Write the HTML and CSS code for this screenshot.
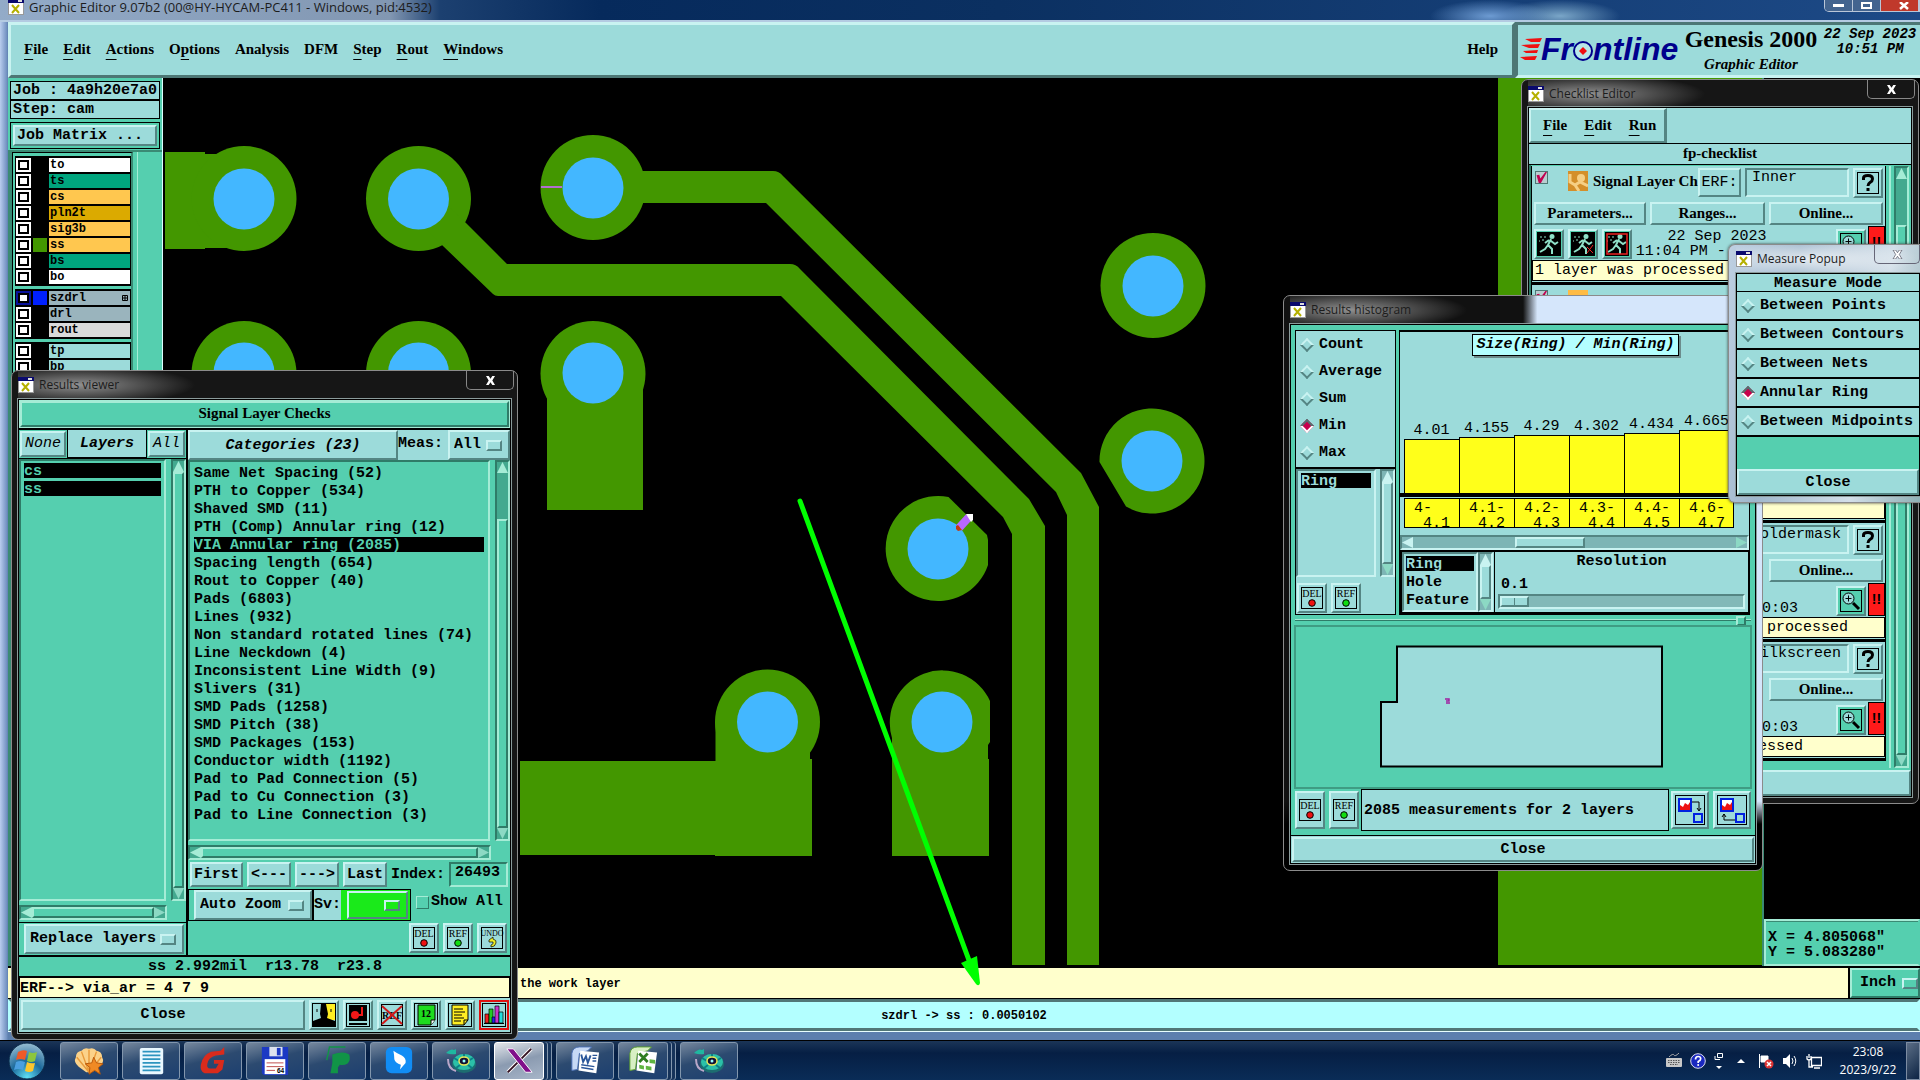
FILE: index.html
```html
<!DOCTYPE html>
<html lang="en">
<head>
  <meta charset="UTF-8" />
  <meta name="viewport" content="width=device-width, initial-scale=1.0"/>
  <title>Graphic Editor 9.07b2</title>
  <link rel="stylesheet" href="styles.css">
</head>
<body>
  <!-- shared icons -->
  <svg class="defs" width="0" height="0">
    <symbol id="i-win" viewBox="0 0 16 16"><rect x=".5" y=".5" width="15" height="15" fill="#fff" stroke="#999"/><rect width="16" height="4" fill="#0a0a6e"/><rect x="10" y="1" width="4" height="2" fill="#ddd"/><path d="M4 6l7 8M11 6l-7 8" stroke="#b5b000" stroke-width="2"/></symbol>
    <symbol id="i-help" viewBox="0 0 24 24"><rect x="1.500" y="1.500" width="21" height="21" fill="none" stroke="#000"/><path d="M7.500 9V7q0-2.500 4.500-2.500T16.500 8q0 2-2.500 3.500-2 1.200-2 3.500" fill="none" stroke="#000" stroke-width="3"/><rect x="10.500" y="17" width="3" height="3"/></symbol>
    <symbol id="i-zoom" viewBox="0 0 24 24"><rect x="1.500" y="1.500" width="21" height="21" fill="#55cfaf" stroke="#000"/><circle cx="9.500" cy="9.500" r="5.500" fill="#9cdbda" stroke="#000"/><path d="M6.500 9.500h6M9.500 6.500v6" stroke="#000"/><path d="M14 14l6 6" stroke="#000" stroke-width="3"/></symbol>
    <symbol id="i-run" viewBox="0 0 24 24"><rect width="24" height="24"/><circle cx="15" cy="4.500" r="2.500" fill="#8fe0c8"/><path d="M14 7l-3 6 4 4v5M11 13l-3 4-5 3M12 8l-4 3M14 9l4 3 3-2" fill="none" stroke="#8fe0c8" stroke-width="2"/><path d="M3 5h2M7 5h2M5 8h2M2 9h1" stroke="#8fe0c8"/></symbol>
    <symbol id="i-reel" viewBox="0 0 32 28"><ellipse cx="19" cy="17" rx="12" ry="9" fill="#1d6d70"/><ellipse cx="19" cy="15" rx="11" ry="8" fill="#2bc0a8"/><path d="M9 11l5 3M28 11l-5 3M19 7v4M11 21l4-3M27 21l-4-3" stroke="#0c7f86" stroke-width="2"/><ellipse cx="19" cy="14" rx="5" ry="4" fill="#113" stroke="#e8e65a" stroke-width="1.500"/><circle cx="19" cy="14" r="1.500" fill="#9ff"/><path d="M1 6q5-5 8-3l2-1v5q-5 1-10-1z" fill="#1fb7a0"/><path d="M3 12q0 10 8 12" fill="none" stroke="#b9a7c9" stroke-width="2"/></symbol>
  </svg>

  <main class="editor">
    <div class="titlebar main-title">
      <svg class="win-icon"><use href="#i-win"/></svg>
      <span>Graphic Editor 9.07b2 (00@HY-HYCAM-PC411 - Windows, pid:4532)</span>
      <div class="caption-btns">
        <button aria-label="Minimize"><i class="min"></i></button><button aria-label="Maximize"><i class="max"></i></button><button class="red" aria-label="Close"><svg width="10" height="8" viewBox="0 0 10 8"><path d="M1 0l8 7M9 0L1 7" stroke="#fff" stroke-width="2.500"/></svg></button>
      </div>
    </div>

    <header class="header">
      <nav class="menubar">
        <a href="#"><u>F</u>ile</a><a href="#"><u>E</u>dit</a><a href="#"><u>A</u>ctions</a><a href="#">O<u>p</u>tions</a><a href="#">Analysis</a><a href="#">DFM</a><a href="#"><u>S</u>tep</a><a href="#"><u>R</u>out</a><a href="#"><u>W</u>indows</a>
        <a href="#" class="help">Help</a>
      </nav>
      <div class="brand">
        <svg class="logo" viewBox="0 0 162 34">
          <g fill="#f01010"><path d="M5 3l17-1-2 4H11zM1 9l19-1-2 4H9zM3 15l15-1-1 3H6zM0 21l17-1-2 4H5z"/></g>
          <g fill="#00008c"><text x="21" y="24">Fr</text><text x="73" y="24">ntline</text></g>
          <circle cx="63" cy="15" r="9" fill="#b8e8e8" stroke="#00008c" stroke-width="2"/><path d="M63 11l4 4-4 4-4-4z" fill="#f01010"/>
        </svg>
        <div class="product"><strong>Genesis 2000</strong><em>Graphic Editor</em></div>
        <div class="clock">22 Sep 2023<br>10:51 PM</div>
      </div>
    </header>

    <section class="workspace">
      <aside class="sidebar">
        <div class="field">Job : 4a9h20e7a0</div>
        <div class="field">Step: cam</div>
        <div class="matrix"><button class="raised">Job Matrix ...</button></div>
        <div class="layers">
          <div class="layer-list">
            <div class="group">
              <label><input type="checkbox"><i></i><span class="white">to</span></label>
              <label><input type="checkbox"><i></i><span class="mask">ts</span></label>
              <label><input type="checkbox"><i></i><span class="signal">cs</span></label>
              <label><input type="checkbox"><i></i><span class="plane">pln2t</span></label>
              <label><input type="checkbox"><i></i><span class="signal">sig3b</span></label>
              <label><input type="checkbox"><i class="on-green"></i><span class="signal">ss</span></label>
              <label><input type="checkbox"><i></i><span class="mask">bs</span></label>
              <label><input type="checkbox"><i></i><span class="white">bo</span></label>
            </div>
            <div class="group">
              <label><input type="checkbox" class="work"><i class="on-blue"></i><span class="drill">szdrl<svg width="6" height="12" viewBox="0 0 6 12"><path d="M.5 4.500h5v5h-5zM3 4.500v5M.5 7h5" fill="none" stroke="#000"/></svg></span></label>
              <label><input type="checkbox"><i></i><span class="drill">drl</span></label>
              <label><input type="checkbox"><i></i><span class="rout">rout</span></label>
            </div>
            <div class="group">
              <label><input type="checkbox"><i></i><span class="misc">tp</span></label>
              <label><input type="checkbox"><i></i><span class="misc">bp</span></label>
            </div>
          </div>
          <div class="layer-scroll"></div>
        </div>
      </aside>

      <div class="canvas">
        <svg viewBox="163 78 1601 888" preserveAspectRatio="xMinYMin slice">
          <g fill="#439700">
            <path d="M165 152h40v2h39v94h-39v1h-40z"/>
            <circle cx="244" cy="198.500" r="52.500"/><circle cx="418.500" cy="198.500" r="52.500"/><circle cx="593" cy="187.500" r="52.500"/>
            <circle cx="244" cy="373.500" r="52.500"/><circle cx="418.500" cy="373.500" r="52.500"/><circle cx="593" cy="373.500" r="52.500"/>
            <path d="M547 380h96v130h-96z"/>
            <!-- traces -->
            <path d="M593 171H773q6 0 10 5L1081 473l18 34V965h-32V515l-11-23L766 203H593z"/>
            <path d="M443 246l-20-20 20-25 23 22 41 41H790q6 0 10 5L1029 499l16 27V965h-33V534l-9-17L781 296H498q-3 0-5-2z"/>
            <circle cx="1153" cy="285.500" r="52.500"/>
            <path d="M1099.500 462A52.500 52.500 0 1 1 1126 506.600z"/>
            <path d="M948.500 497A52.500 52.500 0 1 0 988 565V540l-1-5z"/>
            <circle cx="767.500" cy="722" r="52.500"/>
            <path d="M520 761h195.500V722H810v37h2v97H715v-1H520z"/>
            <path d="M990 701A52.500 52.500 0 0 0 892 738v118h97V759h-1V745l2-3z"/>
            <path d="M1498 78h266v887h-266z"/>
          </g>
          <g fill="#43b7ff">
            <circle cx="244" cy="199" r="30.500"/><circle cx="418.500" cy="199" r="30.500"/><circle cx="593" cy="188" r="30.500"/>
            <circle cx="244" cy="373" r="30.500"/><circle cx="418.500" cy="373" r="30.500"/><circle cx="593" cy="373" r="30.500"/>
            <circle cx="1153" cy="286" r="30.500"/><circle cx="1152" cy="461" r="30.500"/><circle cx="938" cy="549" r="30.500"/>
            <circle cx="767.500" cy="722" r="30.500"/><circle cx="942" cy="722" r="30.500"/>
          </g>
          <path d="M541 187h21" stroke="#b26fd0" stroke-width="2"/>
          <path d="M959 528l10-11" stroke="#b867ff" stroke-width="8"/><path d="M966 514h7v6l-2 2z" fill="#fff"/><path d="M956 526l2-1 4 5-4 1-2-2z" fill="#c33a10"/>
          <path d="M800 501L970 963" stroke="#0f0" stroke-width="5" stroke-linecap="round"/><path d="M961 963l16-7 3 27q-1 4-4 1z" fill="#0f0"/>
        </svg>
      </div>

      <div class="coords-col">
        <div class="coords">X = 4.805068"<br>Y = 5.083280"</div>
      </div>
    </section>

    <div class="command">
      <p>the work layer</p>
      <label class="option teal raised"><select aria-label="Units"><option>Inch</option></select></label>
    </div>
    <div class="status">szdrl -&gt; ss : 0.0050102</div>

    <!-- Checklist editor -->
    <section class="win checklist">
      <div class="titlebar"><svg class="win-icon"><use href="#i-win"/></svg><span>Checklist Editor</span><button class="x" aria-label="Close window"><svg viewBox="0 0 12 10"><path d="M1 0h3l2 3 2-3h3L8 5l3 5H8L6 7l-2 3H1l3-5z" fill="#fff"/></svg></button></div>
      <div class="client">
        <nav class="check-menu"><div class="raised"><a href="#"><u>F</u>ile</a><a href="#"><u>E</u>dit</a><a href="#"><u>R</u>un</a></div></nav>
        <h2>fp-checklist</h2>
        <div class="check-body">
          <div class="check-items">
            <article class="check">
              <div class="check-head"><input type="checkbox" checked aria-label="Enable Signal Layer Checks"><svg class="layer-icon" viewBox="0 0 20 20"><rect width="20" height="20" fill="#d48f2a"/><path d="M2 3v8l5 3 4 6M7 14l5-3 8 4" stroke="#f6cf84" stroke-width="3" fill="none"/><circle cx="13" cy="7" r="4" fill="#f6cf84"/></svg><strong>Signal Layer Ch</strong><button class="raised erf">ERF:</button><input class="sunken" value="Inner" aria-label="ERF model"><button class="raised icon" aria-label="Help"><svg><use href="#i-help"/></svg></button></div>
              <div class="check-acts"><button class="raised">Parameters...</button><button class="raised">Ranges...</button><button class="raised">Online...</button></div>
              <div class="check-run"><button class="raised icon green" aria-label="Run"><svg><use href="#i-run"/></svg></button><button class="raised icon green" aria-label="Run on feature"><svg viewBox="0 0 24 24"><use href="#i-run"/><path d="M16 15l6 6M22 13l-6 8" stroke="#e22"/></svg></button><button class="raised icon green" aria-label="Run in profile"><svg viewBox="0 0 24 24"><use href="#i-run"/><rect x="2" y="2" width="20" height="20" fill="none" stroke="#e22" stroke-width="1.500"/></svg></button><p>22 Sep 2023<span>11:04 PM -</span></p><button class="raised icon green zoom" aria-label="Results"><svg><use href="#i-zoom"/></svg></button><b class="alert">!!</b></div>
              <div class="note">1 layer was processed</div>
            </article>
            <article class="check">
              <div class="check-head"><input type="checkbox" checked aria-label="Enable check"><svg class="layer-icon" viewBox="0 0 20 20"><rect width="20" height="20" fill="#fb4"/></svg></div>
            </article>
            <article class="check">
              <div class="check-head"></div>
              <div class="check-acts"></div>
              <div class="check-run"></div>
              <div class="note"></div>
            </article>
            <article class="check">
              <div class="check-head"><input class="sunken part" value="oldermask" aria-label="ERF model"><button class="raised icon" aria-label="Help"><svg><use href="#i-help"/></svg></button></div>
              <div class="check-acts"><button class="raised last">Online...</button></div>
              <div class="check-run"><p class="end">0:03</p><button class="raised icon green zoom" aria-label="Results"><svg><use href="#i-zoom"/></svg></button><b class="alert">!!</b></div>
              <div class="note long">processed</div>
            </article>
            <article class="check">
              <div class="check-head"><input class="sunken part" value="ilkscreen" aria-label="ERF model"><button class="raised icon" aria-label="Help"><svg><use href="#i-help"/></svg></button></div>
              <div class="check-acts"><button class="raised last">Online...</button></div>
              <div class="check-run"><p class="end">0:03</p><button class="raised icon green zoom" aria-label="Results"><svg><use href="#i-zoom"/></svg></button><b class="alert">!!</b></div>
              <div class="note short">essed</div>
            </article>
          </div>
          <div class="vbar late"><i class="up"></i><i class="thumb"></i><i class="down"></i></div>
        </div>
        <button class="raised check-close" aria-label="Close"></button>
      </div>
    </section>

    <!-- Results histogram -->
    <section class="win histogram">
      <div class="titlebar"><svg class="win-icon"><use href="#i-win"/></svg><span>Results histogram</span><button class="x" aria-label="Close window"></button></div>
      <div class="client">
        <div class="hist-top">
          <div class="hist-left">
            <fieldset class="stats">
              <label><input type="radio" name="stat">Count</label>
              <label><input type="radio" name="stat">Average</label>
              <label><input type="radio" name="stat">Sum</label>
              <label><input type="radio" name="stat" checked>Min</label>
              <label><input type="radio" name="stat">Max</label>
            </fieldset>
            <div class="pick cyan-bars">
              <ul class="list"><li class="sel">Ring</li></ul>
              <div class="vbar"><i class="up"></i><i class="thumb"></i><i class="down"></i></div>
            </div>
            <div class="tools"><button class="raised icon" aria-label="Delete"><svg viewBox="0 0 24 24"><rect x="1.500" y="1.500" width="21" height="21" fill="none" stroke="#000"/><text x="12" y="11" text-anchor="middle">DEL</text><circle cx="12" cy="17" r="3.300" fill="#e11" stroke="#000"/></svg></button><button class="raised icon" aria-label="Reference"><svg viewBox="0 0 24 24"><rect x="1.500" y="1.500" width="21" height="21" fill="none" stroke="#000"/><text x="12" y="11" text-anchor="middle">REF</text><circle cx="12" cy="17" r="3.300" fill="#1d1" stroke="#000"/></svg></button></div>
          </div>
          <div class="hist-right cyan-bars">
            <div class="chart">
              <h3>Size(Ring) / Min(Ring)</h3>
              <div class="bars">
                <div><span>4.01</span><i style="height:54px"></i></div>
                <div><span>4.155</span><i style="height:56px"></i></div>
                <div><span>4.29</span><i style="height:58px"></i></div>
                <div><span>4.302</span><i style="height:58px"></i></div>
                <div><span>4.434</span><i style="height:60px"></i></div>
                <div><span>4.665</span><i style="height:63px"></i></div>
              </div>
              <div class="ticks">
                <div>4-<br>&nbsp;4.1</div><div>4.1-<br>&nbsp;4.2</div><div>4.2-<br>&nbsp;4.3</div><div>4.3-<br>&nbsp;4.4</div><div>4.4-<br>&nbsp;4.5</div><div>4.6-<br>&nbsp;4.7</div>
              </div>
            </div>
            <div class="hbar"><i class="left"></i><i class="thumb"></i><i class="right"></i></div>
            <div class="hist-opts">
              <ul class="list"><li class="sel">Ring</li><li>Hole</li><li>Feature</li></ul>
              <div class="vbar"><i class="up"></i><i class="thumb"></i><i class="down"></i></div>
              <div class="resolution"><label for="res">Resolution</label><output>0.1</output><input type="range" id="res" min="0.1" max="10" step="0.1" value="0.1"></div>
            </div>
          </div>
        </div>
        <div class="splitter"><i></i></div>
        <div class="map">
          <svg viewBox="0 0 454 160"><path d="M101 19.500h265v120H85V75h16V19.500z" fill="#9cdbda" stroke="#000" stroke-width="2"/><path d="M149 72h4v2h-3M150 76h4" stroke="#a020a0" stroke-width="1.500" fill="none"/></svg>
        </div>
        <div class="hist-info">
          <button class="raised icon" aria-label="Delete"><svg viewBox="0 0 24 24"><rect x="1.500" y="1.500" width="21" height="21" fill="none" stroke="#000"/><text x="12" y="11" text-anchor="middle">DEL</text><circle cx="12" cy="17" r="3.300" fill="#e11" stroke="#000"/></svg></button><button class="raised icon" aria-label="Reference"><svg viewBox="0 0 24 24"><rect x="1.500" y="1.500" width="21" height="21" fill="none" stroke="#000"/><text x="12" y="11" text-anchor="middle">REF</text><circle cx="12" cy="17" r="3.300" fill="#1d1" stroke="#000"/></svg></button>
          <p>2085 measurements for 2 layers</p>
          <button class="raised icon big" aria-label="Zoom to chart"><svg viewBox="0 0 30 30"><rect x=".5" y=".5" width="29" height="29" fill="none" stroke="#000"/><rect x="4" y="4" width="12" height="12" fill="#fff" stroke="#0020e0" stroke-width="2"/><path d="M5 15v-5l3 2 2-4 3 2 2-3v8z" fill="#e11"/><path d="M17 7h7v8M22 13l2 3 2-3" fill="none" stroke="#000"/><rect x="19" y="19" width="8" height="8" fill="none" stroke="#0020e0" stroke-width="2"/></svg></button><button class="raised icon big" aria-label="Zoom from chart"><svg viewBox="0 0 30 30"><rect x=".5" y=".5" width="29" height="29" fill="none" stroke="#000"/><rect x="4" y="4" width="12" height="12" fill="#fff" stroke="#0020e0" stroke-width="2"/><path d="M5 15v-5l3 2 2-4 3 2 2-3v8z" fill="#e11"/><path d="M18 25H7v-6M5 22l2-3 2 3" fill="none" stroke="#000"/><rect x="19" y="19" width="8" height="8" fill="none" stroke="#0020e0" stroke-width="2"/></svg></button>
        </div>
        <div class="hist-close"><button class="raised">Close</button></div>
      </div>
    </section>

    <!-- Measure popup -->
    <section class="win measure">
      <div class="titlebar"><svg class="win-icon"><use href="#i-win"/></svg><span>Measure Popup</span><button class="x" aria-label="Close window"><svg viewBox="0 0 12 10"><path d="M1 0h3l2 3 2-3h3L8 5l3 5H8L6 7l-2 3H1l3-5z" fill="#fff" stroke="#445" stroke-width=".7"/></svg></button></div>
      <div class="client">
        <fieldset>
          <legend>Measure Mode</legend>
          <label><input type="radio" name="measure">Between Points</label>
          <label><input type="radio" name="measure">Between Contours</label>
          <label><input type="radio" name="measure">Between Nets</label>
          <label><input type="radio" name="measure" checked>Annular Ring</label>
          <label><input type="radio" name="measure">Between Midpoints</label>
        </fieldset>
        <button class="raised">Close</button>
      </div>
    </section>

    <!-- Results viewer -->
    <section class="win viewer">
      <div class="titlebar"><svg class="win-icon"><use href="#i-win"/></svg><span>Results viewer</span><button class="x" aria-label="Close window"><svg viewBox="0 0 12 10"><path d="M1 0h3l2 3 2-3h3L8 5l3 5H8L6 7l-2 3H1l3-5z" fill="#fff"/></svg></button></div>
      <div class="client">
        <h2>Signal Layer Checks</h2>
        <div class="panes">
          <div class="pane-layers">
            <div class="pane-head"><button class="raised">None</button><b>Layers</b><button class="raised">All</button></div>
            <div class="pick">
              <ul class="list"><li class="sel">cs</li><li class="sel">ss</li></ul>
              <div class="vbar"><i class="up"></i><i class="thumb"></i><i class="down"></i></div>
            </div>
            <div class="hbar full"><i class="left"></i><i class="thumb"></i><i class="right"></i></div>
            <div class="pane-foot"><label class="option raised"><select aria-label="Layer action"><option>Replace layers</option></select></label></div>
          </div>
          <div class="pane-cats">
            <div class="cat-head"><button class="raised">Categories (23)</button><label for="meas">Meas:</label><span class="option raised"><select id="meas"><option>All</option></select></span></div>
            <div class="pick">
              <ul class="list">
                <li>Same Net Spacing (52)</li>
                <li>PTH to Copper (534)</li>
                <li>Shaved SMD (11)</li>
                <li>PTH (Comp) Annular ring (12)</li>
                <li class="sel">VIA Annular ring (2085)</li>
                <li>Spacing length (654)</li>
                <li>Rout to Copper (40)</li>
                <li>Pads (6803)</li>
                <li>Lines (932)</li>
                <li>Non standard rotated lines (74)</li>
                <li>Line Neckdown (4)</li>
                <li>Inconsistent Line Width (9)</li>
                <li>Slivers (31)</li>
                <li>SMD Pads (1258)</li>
                <li>SMD Pitch (38)</li>
                <li>SMD Packages (153)</li>
                <li>Conductor width (1192)</li>
                <li>Pad to Pad Connection (5)</li>
                <li>Pad to Cu Connection (3)</li>
                <li>Pad to Line Connection (3)</li>
              </ul>
              <div class="vbar late"><i class="up"></i><i class="thumb"></i><i class="down"></i></div>
            </div>
            <div class="hbar full"><i class="left"></i><i class="thumb"></i><i class="right"></i></div>
            <div class="nav-row"><button class="raised">First</button><button class="raised">&lt;---</button><button class="raised">---&gt;</button><button class="raised">Last</button><label for="idx">Index:</label><input id="idx" class="sunken" value="26493"></div>
            <div class="zoom-row">
              <div class="zoom-box"><label class="option raised"><select aria-label="Zoom mode"><option>Auto Zoom</option></select></label><label for="sv">Sv:</label><span class="sv"><span class="option raised"><select id="sv"><option></option></select></span></span></div>
              <label class="show-all"><input type="checkbox">Show All</label>
            </div>
            <div class="tools"><button class="raised icon" aria-label="Delete"><svg viewBox="0 0 24 24"><rect x="1.500" y="1.500" width="21" height="21" fill="none" stroke="#000"/><text x="12" y="11" text-anchor="middle">DEL</text><circle cx="12" cy="17" r="3.300" fill="#e11" stroke="#000"/></svg></button><button class="raised icon" aria-label="Reference"><svg viewBox="0 0 24 24"><rect x="1.500" y="1.500" width="21" height="21" fill="none" stroke="#000"/><text x="12" y="11" text-anchor="middle">REF</text><circle cx="12" cy="17" r="3.300" fill="#1d1" stroke="#000"/></svg></button><button class="raised icon" aria-label="Undo"><svg viewBox="0 0 24 24"><rect x="1.500" y="1.500" width="21" height="21" fill="none" stroke="#000"/><text x="12" y="10" text-anchor="middle" class="small">UNDO</text><path d="M9 14l4-3v2q4 1 3 4-1 4-5 4v-2q3-1 2-3h-4z" fill="#ee2" stroke="#000" stroke-width=".7"/></svg></button></div>
          </div>
        </div>
        <div class="result">ss 2.992mil&nbsp; r13.78&nbsp; r23.8</div>
        <div class="erf-line">ERF--&gt; via_ar = 4 7 9</div>
        <div class="viewer-foot">
          <button class="raised">Close</button>
          <button class="raised icon" aria-label="Compare"><svg viewBox="0 0 24 24"><rect x=".5" y=".5" width="23" height="23" fill="#9cdbda" stroke="#000"/><path d="M14 1h9v16h-9z" fill="#fe2"/><path d="M9 1h5l2 10-1 4 8 3v5H1v-5l8-3-1-4z"/><path d="M5 6v3M19 6v3" stroke="#000"/></svg></button>
          <button class="raised icon" aria-label="Snapshot"><svg viewBox="0 0 24 24"><rect x=".5" y=".5" width="23" height="23" fill="#9cdbda" stroke="#000"/><path d="M3 2h18v16H3zM3 20h18v2H3z"/><circle cx="9" cy="12" r="4" fill="#f01818"/><path d="M11 12h5V4" stroke="#f01818" stroke-width="2" fill="none"/></svg></button>
          <button class="raised icon" aria-label="Clear reference"><svg viewBox="0 0 24 24"><rect x="1.500" y="1.500" width="21" height="21" fill="none" stroke="#000"/><text x="12" y="16" text-anchor="middle">REF</text><path d="M2 3l20 18M22 3L2 21" stroke="#d01818" stroke-width="2"/></svg></button>
          <button class="raised icon" aria-label="Report count"><svg viewBox="0 0 24 24"><rect x=".5" y=".5" width="23" height="23" fill="#9cdbda" stroke="#000"/><path d="M4 2h17v15l-4 5H4z" fill="#1edc1e" stroke="#000"/><text x="12" y="14" text-anchor="middle">12</text><path d="M17 22v-5h4" fill="#fff" stroke="#000"/></svg></button>
          <button class="raised icon" aria-label="Notes"><svg viewBox="0 0 24 24"><rect x=".5" y=".5" width="23" height="23" fill="#9cdbda" stroke="#000"/><path d="M4 2h16v15l-4 5H4z" fill="#fe2" stroke="#000"/><path d="M6 6h9M6 9h11M6 12h8M6 15h10M6 18h7M16 22v-5h4" stroke="#000" fill="none"/></svg></button>
          <button class="raised icon hot" aria-label="Histogram"><svg viewBox="0 0 24 24"><rect x=".5" y=".5" width="23" height="23" fill="#9cdbda" stroke="#000"/><g stroke="#000" stroke-width=".7"><path d="M3 11h4v9H3z" fill="#e22"/><path d="M7 6h4v14H7z" fill="#2c2"/><path d="M10 14h4v6h-4z" fill="#22e"/><path d="M13 3h4v17h-4z" fill="#c3c"/><path d="M17 9h4v11h-4z" fill="#2dd"/></g><path d="M2 20.500h20" stroke="#000"/></svg></button>
        </div>
      </div>
    </section>
  </main>

  <footer class="taskbar">
    <button class="start" aria-label="Start"><svg viewBox="0 0 38 38"><defs><radialGradient id="orb" cx=".5" cy=".95" r=".9"><stop offset="0" stop-color="#5fe0f5"/><stop offset=".5" stop-color="#1c6a9c"/><stop offset="1" stop-color="#8db6cd"/></radialGradient></defs><circle cx="19" cy="19" r="18" fill="url(#orb)" stroke="#0b2c4a"/><path d="M10 10q5-3 9-1l-2 9q-5-2-9 0z" fill="#ee5a28"/><path d="M21 10q4 2 8 0l-2 9q-4 2-8 0z" fill="#8cc63e"/><path d="M8 20q4-2 9 0l-2 8q-5-2-9 0z" fill="#4a9fe0"/><path d="M19 20q4 2 8 1l-2 8q-4 2-8 0z" fill="#fcc62d"/></svg></button>
    <button class="task" aria-label="Shell"><svg viewBox="0 0 34 32"><path d="M17 3q5-2 8 2 6 1 6 7 3 5-3 10l-8 6h-6l-8-6Q0 17 3 12q0-6 6-7 3-4 8-2z" fill="#fbd28a"/><path d="M17 28V4M17 28L9 6M17 28L4 12M17 28L25 6M17 28L30 12" stroke="#e89a3a" stroke-width="1.500"/><path d="M22 12l3 6 7 1-5 4 2 7-6-4-6 4 1-7-5-4 7-1z" fill="#f08a24" stroke="#b85608"/></svg></button>
    <button class="task" aria-label="Notepad"><svg viewBox="0 0 34 32"><rect x="5" y="2" width="25" height="28" rx="2" fill="#eaf8ff"/><path d="M8 6h19M8 10h19M8 14h19M8 18h19M8 22h19M8 26h19" stroke="#2c94bf" stroke-width="2"/></svg></button>
    <button class="task" aria-label="Genesis"><svg viewBox="0 0 34 32"><path d="M29 1v8l-9 1q-8 2-9 9-1 5 3 5h6l3-5h-5v-4h11l-2 10-5 4H8q-5-2-4-9 2-11 11-14l10-1z" fill="#d92b1c"/></svg></button>
    <button class="task" aria-label="Save"><svg viewBox="0 0 34 32"><path d="M3 1h28v30H5l-2-2z" fill="#1c39c4"/><path d="M11 1h14v10H11z" fill="#dde2ee"/><path d="M19 2h4v8h-4z" fill="#1c39c4"/><path d="M6 14h22v16H6z" fill="#fff"/><path d="M8 18h18M8 22h18M8 26h9" stroke="#b44"/><text x="23" y="29" text-anchor="middle">64</text></svg></button>
    <button class="task" aria-label="P client"><svg viewBox="0 0 34 32"><path d="M6 15L9 1h17" stroke="#119447" fill="none" stroke-width="1.500"/><path d="M12 9q12-4 18 0 2 6-2 10-4 2-8 1l-2 3v6h-8l2-11z" fill="#119447"/></svg></button>
    <button class="task" aria-label="Wing"><svg viewBox="0 0 34 32"><rect x="3" y="1" width="28" height="28" rx="6" fill="#118df5"/><path d="M11 5q4 3 9 5 5 3 4 8l-6 7 1-5q-6-2-7-6 0-4-1-9z" fill="#fff"/></svg></button>
    <button class="task" aria-label="Reel"><svg viewBox="0 0 34 28"><use href="#i-reel"/></svg></button>
    <button class="task active stack" aria-label="X server"><svg viewBox="0 0 34 32"><path d="M30 3L5 28" stroke="#fff" stroke-width="4"/><path d="M30 3L5 28" stroke="#312" stroke-width="2"/><path d="M4 3h7l20 25h-7z" fill="#80108a" stroke="#fff"/></svg></button>
    <button class="task" aria-label="Word"><svg viewBox="0 0 34 32"><path d="M3 26V8q1-7 8-7h13l-4 4-9 3-2 17z" fill="#c7d9f5" stroke="#4a6fb5"/><path d="M12 5l20 2-3 22-19-3z" fill="#fff"/><path d="M13 9l2 8 3-6 2 7 3-8" stroke="#2a5699" stroke-width="2" fill="none"/><path d="M25 10h5M25 13h4M25 16h4M13 20l14 2M13 23l13 2" stroke="#2a5699" stroke-width="1.500"/></svg></button>
    <button class="task stack" aria-label="Excel"><svg viewBox="0 0 34 32"><path d="M3 26V8q1-7 8-7h15l-4 4-11 3-2 17z" fill="#d8efc4" stroke="#5aa02c"/><path d="M12 5l20 2-3 22-19-3z" fill="#fff"/><path d="M13 8l9 9M22 8l-9 9" stroke="#2f7d20" stroke-width="3"/><path d="M13 20l5 1v4l-5-1zM20 21l6 1v4l-6-1zM24 14l6 1v4l-6-1z" fill="#5fb541"/></svg></button>
    <button class="task" aria-label="Reel window"><svg viewBox="0 0 34 28"><use href="#i-reel"/></svg></button>

    <div class="tray">
      <svg width="16" height="16" viewBox="0 0 16 16"><path d="M3 4q4-4 5-2t5-2" stroke="#aaa" fill="none"/><rect y="5" width="16" height="9" rx="1" fill="#c8c8c8"/><path d="M2 7.500h12M2 9.500h12M4 11.500h8" stroke="#555" stroke-dasharray="1.500 1"/></svg>
      <svg width="16" height="16" viewBox="0 0 16 16"><circle cx="8" cy="8" r="7.300" fill="#1a28c0" stroke="#dde"/><path d="M5.500 6.500q0-3 2.600-3t2.600 2.300q0 1.700-2.500 2.700v1.500" stroke="#fff" stroke-width="1.700" fill="none"/><circle cx="8.200" cy="12" r="1" fill="#fff"/></svg>
      <svg width="10" height="18" viewBox="0 0 10 18"><path d="M3.500 1.500h5v4h-5zM1 4v3.500h5" stroke="#fff" fill="none"/><path d="M2 14h6l-3 3z" fill="#fff"/></svg>
      <svg class="more" width="8" height="16" viewBox="0 0 8 16"><path d="M0 10l4-4 4 4z" fill="#fff"/></svg>
      <svg width="16" height="16" viewBox="0 0 16 16"><path d="M1.500 1v14M3 3h7v6H3z" stroke="#fff" fill="#fff"/><circle cx="11" cy="11" r="4.500" fill="#d33"/><path d="M9 9l4 4M13 9l-4 4" stroke="#fff" stroke-width="1.500"/></svg>
      <svg width="16" height="16" viewBox="0 0 16 16"><path d="M1 5h3l4-4v14l-4-4H1z" fill="#fff"/><path d="M10 5q2 3 0 6M12 3q3.500 5 0 10" stroke="#fff" fill="none"/></svg>
      <svg width="16" height="16" viewBox="0 0 16 16"><path d="M5.500 4.500h10v8h-10zM8 15h6M3 1v4M1 3v3q2 2 4 0V3M3 7v7h4" stroke="#fff" fill="none" stroke-width="1.300"/></svg>
      <time>23:08<br>2023/9/22</time>
      <button class="show-desktop" aria-label="Show desktop"></button>
    </div>
  </footer>
</body>
</html>
```
FILE: styles.css
```css
* { margin: 0; padding: 0; box-sizing: border-box; }
body {
  --teal: #55cfaf;
  --teal-dark: #2f7c68;
  --teal-lite: #a5ecd6;
  --cyan: #9cdbda;
  --cyan-dark: #548583;
  --cyan-lite: #c9f3f1;
  --cream: #ffffcc;
  height: 100vh;
  overflow: hidden;
  display: flex;
  flex-direction: column;
  background: #000;
  color: #000;
  font: bold 15px/18px "Liberation Mono", monospace;
}
.defs { position: absolute; }
button, input, select { font: inherit; color: inherit; border-radius: 0; border: none; background: none; }
select { appearance: none; width: 100%; padding: 0 4px; }
a { color: inherit; text-decoration: none; }
ul { list-style: none; }
fieldset { border: none; }
i { display: block; }
u { text-decoration: underline; text-underline-offset: 5px; text-decoration-thickness: 1px; }

/* motif bevels */
.raised {
  background: var(--cyan);
  border: 2px solid;
  border-color: var(--cyan-lite) var(--cyan-dark) var(--cyan-dark) var(--cyan-lite);
  white-space: nowrap;
}
.sunken {
  border: 2px solid;
  border-color: var(--cyan-dark) var(--cyan-lite) var(--cyan-lite) var(--cyan-dark);
}
.icon { width: 30px; height: 30px; display: grid; place-items: center; }
.icon svg { width: 24px; height: 24px; }
.icon text { font: 10px "Liberation Serif", serif; }
.icon .small { font-size: 8px; }
.icon.green { background: var(--teal); }
.option { display: flex; align-items: center; }
.option::after {
  content: '';
  flex: none;
  width: 12px;
  height: 7px;
  margin-right: 6px;
  border: 2px solid;
  border-color: var(--cyan-lite) var(--cyan-dark) var(--cyan-dark) var(--cyan-lite);
}

/* motif scroll bars */
.vbar, .hbar {
  background: #43a98f;
  border: 2px solid;
  border-color: var(--teal-dark) var(--teal-lite) var(--teal-lite) var(--teal-dark);
  display: flex;
}
.vbar { flex-direction: column; width: 15px; }
.hbar { height: 15px; }
.vbar .thumb, .hbar .thumb {
  flex: 1;
  background: var(--teal);
  border: 2px solid;
  border-color: var(--teal-lite) var(--teal-dark) var(--teal-dark) var(--teal-lite);
}
.vbar.late .thumb { margin-top: 46px; }
.up, .down, .left, .right { width: 11px; height: 11px; background: var(--teal-lite); flex: none; }
.up { clip-path: polygon(50% 0, 100% 100%, 0 100%); }
.down { clip-path: polygon(0 0, 100% 0, 50% 100%); background: #8cd9c4; }
.left { clip-path: polygon(0 50%, 100% 0, 100% 100%); }
.right { clip-path: polygon(0 0, 100% 50%, 0 100%); background: #8cd9c4; }
.cyan-bars .vbar, .cyan-bars .hbar {
  background: #7db5b5;
  border-color: var(--cyan-dark) var(--cyan-lite) var(--cyan-lite) var(--cyan-dark);
}
.cyan-bars .thumb {
  background: var(--cyan);
  border-color: var(--cyan-lite) var(--cyan-dark) var(--cyan-dark) var(--cyan-lite);
}
.cyan-bars .up, .cyan-bars .left { background: var(--cyan-lite); }

.list {
  flex: 1;
  padding: 2px 3px;
  border: 2px solid;
  border-color: var(--teal-dark) var(--teal-lite) var(--teal-lite) var(--teal-dark);
}
.list li { height: 15px; line-height: 17px; margin-bottom: 3px; white-space: nowrap; }
.list .sel { background: #000; color: var(--teal); }
.cyan-bars .list { border-color: var(--cyan-dark) var(--cyan-lite) var(--cyan-lite) var(--cyan-dark); }
.cyan-bars .sel { color: var(--cyan); }
.pick { display: flex; gap: 5px; flex: 1; }

input[type="radio"] {
  appearance: none;
  width: 10px;
  height: 10px;
  margin: 0 7px 0 6px;
  border: 2px solid;
  border-color: var(--cyan-lite) var(--cyan-dark) var(--cyan-dark) var(--cyan-lite);
  transform: rotate(45deg);
}
input[type="radio"]:checked { background: #c8004c; border-color: #547070 #fff #fff #547070; }
input[type="checkbox"] { appearance: none; }

/* main window */
.editor {
  flex: 1;
  min-height: 0;
  position: relative;
  display: flex;
  flex-direction: column;
  padding: 0 0 9px 8px;
  background: linear-gradient(90deg, #b9cdee 0, #6f8fbf 7px, #5c7fae 8px);
}
.titlebar {
  display: flex;
  align-items: center;
  gap: 5px;
  font: 13px/18px "Open Sans", sans-serif;
  color: #1c1c1c;
}
.win-icon { width: 16px; height: 16px; }
.main-title {
  height: 22px;
  flex: none;
  margin-left: -8px;
  padding: 0 0 6px 8px;
  background: radial-gradient(ellipse 60px 16px at 1490px 16px, #6d9bd2, transparent), radial-gradient(ellipse 60px 16px at 1560px 16px, #7aa6c8, transparent), linear-gradient(90deg, #93abc8 0, #8297b2 390px, #1c4070 440px, #062a5c 600px, #0b3061 1000px, #1d4a87);
  border-bottom: 2px solid #b4cbe2;
}
.caption-btns { margin-left: auto; align-self: flex-start; display: flex; height: 12px; border: 1px solid #b9c6d8; border-top: none; border-radius: 0 0 0 5px; overflow: hidden; }
.caption-btns button { width: 28px; background: #43648f; border-right: 1px solid #b9c6d8; display: grid; place-items: center; }
.caption-btns .red { width: 38px; background: #c0392b; padding-left: 8px; }
.min { width: 11px; height: 3px; background: #fff; }
.max { width: 11px; height: 7px; border: 2px solid #fff; }

.header { height: 56px; flex: none; display: flex; }
.menubar, .brand {
  background: var(--cyan);
  border: 3px solid;
  border-color: #4d7775 var(--cyan-lite) #4d7775 #4d7775;
}
.menubar { flex: 1; display: flex; align-items: center; gap: 15px; padding: 0 14px 2px 13px; font: bold 15px/20px "Liberation Serif", serif; border-color: var(--cyan-lite) #4d7775 #4d7775 var(--cyan-lite); }
.help { margin-left: auto; }
.brand { width: 405px; display: flex; padding-left: 2px; border-bottom-color: var(--cyan-lite); border-right: none; white-space: nowrap; }
.logo { width: 162px; height: 34px; margin-top: 11px; flex: none; overflow: visible; }
.logo text { font: italic bold 32px "Liberation Sans", sans-serif; }
.product { width: 138px; text-align: center; display: flex; flex-direction: column; flex: none; }
.product strong { font: bold 24px/28px "Liberation Serif", serif; }
.product em { font: italic bold 15px/22px "Liberation Serif", serif; }
.clock { flex: 1; font-style: italic; font-size: 14px; line-height: 15px; text-align: center; padding-top: 2px; }

.workspace { flex: 1; min-height: 0; display: flex; background: #000; }
.sidebar { width: 155px; background: var(--teal); display: flex; flex-direction: column; padding-top: 3px; border-right: 1px solid #dff; overflow: hidden; }
.field { height: 19px; margin: 0 2px; background: var(--cyan); border: 1px solid #000; padding-left: 2px; line-height: 18px; white-space: nowrap; }
.matrix { margin: 3px 2px 1px; border: 1px solid #000; padding: 2px; }
.matrix .raised { width: 100%; height: 21px; text-align: left; padding-left: 2px; line-height: 17px; }
.layers { flex: 1; display: flex; gap: 4px; background: var(--teal); border-top: 2px solid #3a8a74; border-left: 4px solid #3a8a74; }
.layer-list { width: 121px; padding-top: 3px; padding-left: 2px; border-top: 1px solid #000; border-left: 1px solid #000; border-right: 2px solid #3a8a74; }
.group { background: #000; padding: 1px; margin-bottom: 3px; font-size: 12px; line-height: 14px; }
.group label { display: flex; height: 16px; gap: 2px; padding: 1px 0; }
.group input { width: 15px; height: 14px; background: #000; border: 2px solid #fff; box-shadow: inset 0 0 0 2px #000, inset 0 0 0 5px #fff; }
.group .work { border-color: #0a129c; }
.group i { width: 14px; }
.on-green { background: #439700; }
.on-blue { background: #0020ff; }
.group span { flex: 1; padding: 0 2px 0 1px; display: flex; justify-content: space-between; }
.white { background: #fff; }
.mask { background: #00a57e; }
.signal { background: #ffc74f; }
.plane { background: #dbaa00; }
.drill { background: #9ab4bd; }
.rout { background: #dadada; }
.misc { background: var(--cyan); }
.layer-scroll { flex: 1; border-left: 1px solid var(--teal-lite); }

.canvas { flex: 1; min-width: 0; position: relative; }
.canvas svg { position: absolute; inset: 0; width: 100%; height: 100%; overflow: visible; fill: none; z-index: 1; }
.coords-col { width: 158px; display: flex; flex-direction: column; justify-content: flex-end; border-left: 2px solid #3a8a74; position: relative; z-index: 1; background: #000; margin-left: -2px; }
.coords { background: var(--teal); border: 2px solid; border-color: var(--teal-lite) var(--teal) var(--teal-lite) var(--teal-lite); box-shadow: inset 0 1px #3a8a74; padding: 9px 2px 4px; line-height: 15px; }

.command { height: 33px; flex: none; display: flex; background: #000; padding: 2px 0 1px; }
.command p { flex: 1; background: var(--cream); margin-right: 2px; padding-left: 512px; font-size: 12px; line-height: 32px; }
.command .option { width: 70px; padding-left: 4px; background: var(--teal); border-color: var(--teal-lite) var(--teal-dark) var(--teal-dark) var(--teal-lite); }
.command .option::after { margin-right: 0; }
.status {
  height: 32px;
  flex: none;
  background: #b3ffff;
  border: 3px solid;
  border-color: #517777 #b3ffff #517777 #b3ffff;
  box-shadow: 0 1px #e8ffff;
  text-align: center;
  font-size: 12px;
  line-height: 28px;
}

/* floating windows */
.win {
  position: absolute;
  z-index: 2;
  display: flex;
  flex-direction: column;
  padding: 0 6px 6px;
  border: 1px solid #8b8b8b;
  border-radius: 7px;
  background: #161616;
}
.win .titlebar { height: 28px; flex: none; margin-right: -3px; font-size: 12px; background: radial-gradient(ellipse 130px 22px at 60px 14px, rgba(185, 185, 185, .75), transparent 90%); }
.win .titlebar span { flex: 1; }
.win .x { align-self: flex-start; width: 48px; height: 19px; border: 1px solid #888; border-top: none; border-radius: 0 0 5px 5px; display: grid; place-items: center; }
.x svg { width: 11px; height: 9px; }
.win .client { flex: 1; min-height: 0; display: flex; flex-direction: column; background: var(--teal); border: 1px solid #000; outline: 1px solid #8b9b9b; }

.checklist { right: 1px; top: 79px; width: 398px; height: 725px; font-weight: normal; }
.checklist .titlebar { height: 27px; }
.check-menu { background: var(--cyan); height: 36px; flex: none; border-bottom: 1px solid #000; }
.check-menu .raised { display: inline-flex; gap: 17px; width: 138px; height: 35px; padding: 6px 12px; border-right: 3px solid var(--cyan-dark); font: bold 15px/18px "Liberation Serif", serif; }
.checklist h2, .viewer h2 { font: bold 15px/18px "Liberation Serif", serif; text-align: center; }
.checklist h2 { background: var(--cyan); height: 21px; border-bottom: 1px solid #000; }
.check-body { flex: 1; min-height: 0; display: flex; gap: 3px; padding: 1px 2px 2px 0; border-left: 2px solid var(--teal-dark); }
.check-items { flex: 1; overflow: hidden; border-right: 2px solid var(--teal-lite); padding-right: 3px; }
.check { height: 119px; background: var(--cyan); border-right: 1px solid #000; border-left: 1px solid #000; border-bottom: 3px solid #000; padding: 2px 0 0; }
.check-head { display: flex; height: 29px; padding-right: 2px; }
.check-head input[type="checkbox"] { width: 13px; height: 13px; margin: 3px 20px 0 3px; border: 1px solid #4d7775; background: #b8cdd0; flex: none; }
.check-head input[type="checkbox"]::before { content: ''; display: block; width: 11px; height: 11px; background: #c00050; clip-path: polygon(5% 30%, 30% 25%, 40% 60%, 85% 0, 100% 0, 45% 100%, 25% 100%); }
.layer-icon { width: 20px; height: 20px; margin: 3px 5px 0 0; flex: none; }
.check-head strong { font: bold 15px/26px "Liberation Serif", serif; width: 105px; flex: none; white-space: nowrap; }
.erf { width: 43px; flex: none; text-align: center; }
.check-head .sunken { flex: 1; min-width: 0; margin: 0 4px; padding: 0 0 10px 5px; font-weight: normal; }
.check-head .part { text-align: right; padding-right: 6px; }
.check-acts { display: grid; grid-template-columns: 112px 1fr 114px; gap: 4px; padding: 5px 2px 0; height: 28px; }
.check-acts button { height: 23px; font: bold 15px/17px "Liberation Serif", serif; }
.check-acts .last { grid-column: 3; }
.check-run { display: flex; align-items: flex-end; gap: 4px; height: 34px; padding-left: 2px; }
.check-run p { width: 163px; margin-left: auto; line-height: 15px; text-align: center; white-space: nowrap; align-self: flex-end; }
.check-run p span { display: block; text-align: left; }
.check-run .end { text-align: right; }
.check-run .zoom { margin-left: 34px; }
.alert { width: 17px; height: 33px; margin-left: -2px; background: #ff1a1a; border: 1px solid #000; font: bold 14px/30px "Liberation Sans", sans-serif; text-align: center; }
.note { background: var(--cream); border: 1px solid #000; height: 21px; padding-left: 2px; line-height: 20px; margin-top: 1px; }
.note.long { text-align: right; padding-right: 36px; }
.note.short { text-align: right; padding-right: 81px; }
.check-close { height: 26px; }

.histogram {
  right: 157px;
  top: 295px;
  width: 480px;
  height: 576px;
  background: linear-gradient(transparent 88%, #000 92%), linear-gradient(90deg, #111 50%, #d5e6fb 53%);
}
.histogram .client { padding: 5px 4px 0 4px; }
.histogram .x { border-color: #889; width: 70px; margin-right: -50px; }
.hist-top { display: flex; height: 285px; gap: 3px; padding-right: 1px; }
.hist-left { width: 101px; background: var(--cyan); border: 1px solid #000; display: flex; flex-direction: column; }
.stats { padding-bottom: 1px; border-bottom: 2px solid #000; }
.stats label { display: flex; align-items: center; height: 27px; }
.hist-left .pick { gap: 4px; }
.tools { display: flex; gap: 4px; }
.hist-left .tools { padding: 6px 1px 1px; }
.hist-right { flex: 1; min-width: 0; display: flex; flex-direction: column; background: var(--cyan); border: 1px solid #000; border-top: 2px solid #000; }
.chart { flex: 1; display: flex; flex-direction: column; overflow: hidden; }
.chart h3 { align-self: center; margin: 2px 0 0 2px; background: #b3ffff; border: 1px solid #000; box-shadow: 2px 2px #6c8c8c; font: italic bold 15px/20px "Liberation Mono", monospace; padding: 0 3px; }
.bars { flex: 1; display: grid; grid-template-columns: repeat(6, 55px); align-items: end; padding-left: 4px; border-bottom: 4px solid #000; font-weight: normal; line-height: 16px; text-align: center; }
.bars i { background: #ffff1a; border: 1px solid #000; border-right: none; border-bottom: none; }
.ticks { display: grid; grid-template-columns: repeat(6, 55px); height: 30px; margin: 1px 0 7px 4px; line-height: 15px; font-weight: normal; }
.ticks div { background: #ffff1a; border: 1px solid #000; border-right: none; padding: 2px 0 0 9px; height: 30px; overflow: hidden; }
.ticks div:last-child { border-right: 1px solid #000; }
.hist-right .hbar .thumb { flex: none; width: 70px; margin: 0 auto 0 102px; }
.hist-opts { display: flex; height: 64px; border: 2px solid #000; border-right-width: 1px; }
.hist-opts .list { flex: none; width: 76px; padding: 2px 2px 0; }
.hist-opts .vbar { margin-right: 1px; }
.resolution { flex: 1; border-left: 1px solid #000; display: flex; flex-direction: column; padding: 1px 3px 3px; }
.resolution label { text-align: center; }
.resolution output { padding: 6px 0 0 3px; line-height: 16px; }
.resolution input { appearance: none; width: 100%; height: 15px; margin-top: auto; background: #82b9b8; border: 2px solid; border-color: var(--cyan-dark) var(--cyan-lite) var(--cyan-lite) var(--cyan-dark); }
.resolution input::-webkit-slider-thumb { appearance: none; width: 29px; height: 11px; border: 2px solid; border-color: var(--cyan-lite) var(--cyan-dark) var(--cyan-dark) var(--cyan-lite); background: linear-gradient(90deg, var(--cyan) 12px, #548583 12px, #548583 13px, var(--cyan) 13px); }
.splitter { height: 11px; display: flex; align-items: center; justify-content: flex-end; background: linear-gradient(transparent 4px, var(--teal-lite) 4px, var(--teal-lite) 5px, var(--teal-dark) 5px, var(--teal-dark) 6px, transparent 6px); }
.splitter i { width: 10px; height: 10px; margin-right: 5px; background: var(--teal); border: 2px solid; border-color: var(--teal-lite) var(--teal-dark) var(--teal-dark) var(--teal-lite); }
.map { flex: 1; min-height: 0; border: 1px solid #000; outline: 2px solid #3f9c83; outline-offset: -1px; }
.map svg { width: 100%; height: 100%; display: block; }
.hist-info { display: flex; align-items: center; gap: 4px; height: 44px; }
.hist-info .icon { flex: none; height: 38px; }
.hist-info .big { width: 38px; }
.hist-info .big svg { width: 30px; height: 30px; }
.hist-info p { flex: 1; height: 42px; background: var(--cyan); border: 1px solid #000; padding-left: 2px; line-height: 42px; margin: 0 -2px; }
.hist-close { margin: 3px -4px 0; background: var(--cyan); border-top: 1px solid #000; padding: 1px; }
.hist-close .raised { width: 100%; height: 25px; }

.measure { right: 0; top: 244px; width: 192px; height: 259px; padding-left: 7px; padding-right: 0; border-right: none; border-radius: 7px 0 0 7px; background: linear-gradient(100deg, #bfd0e2, #9fb7cc 30%, #d3dfe9 70%, #8fb0b5); box-shadow: 0 0 3px #333; }
.measure .titlebar { margin-right: 0; background: radial-gradient(ellipse 110px 18px at 75px 14px, rgba(255, 255, 255, .7), transparent); }
.measure .x { width: 46px; border-color: #667; }
.measure legend { width: 100%; height: 18px; line-height: 19px; text-align: center; background: var(--cyan); border-bottom: 1px solid #000; }
.measure label { display: flex; align-items: center; height: 29px; padding-top: 1px; background: var(--cyan); border-bottom: 2px solid #000; white-space: nowrap; }
.measure .client > .raised { margin-top: auto; height: 26px; padding-top: 2px; }

.viewer { left: 11px; top: 370px; bottom: 0; width: 507px; }
.viewer .titlebar { height: 28px; }
.viewer h2 { height: 28px; flex: none; line-height: 21px; border: 3px solid; border-color: var(--teal-lite) var(--teal-dark) var(--teal-dark) var(--teal-lite); outline: 1px solid var(--teal-lite); outline-offset: -1px; }
.panes { flex: 1; min-height: 0; display: flex; border-top: 2px solid #000; border-bottom: 2px solid #000; }
.pane-layers { width: 169px; display: flex; flex-direction: column; border-right: 2px solid #000; }
.pane-head { display: flex; height: 29px; justify-content: space-between; align-items: stretch; border-bottom: 1px solid #000; font-style: italic; background: var(--teal); }
.pane-head button { font-style: italic; font-weight: normal; margin: 1px; padding: 0 3px; }
.pane-head b { flex: 1; text-align: center; background: var(--cyan); line-height: 27px; border: 1px solid #000; border-top: none; }
.hbar.full { margin: 4px 19px 2px 0; }
.pane-foot { border-top: 1px solid #000; padding: 1px 2px 1px 5px; }
.pane-foot .option { height: 30px; }
.pane-cats { flex: 1; min-width: 0; display: flex; flex-direction: column; }
.pane-cats .list { padding: 3px 4px; }
.cat-head { display: flex; height: 30px; background: var(--cyan); line-height: 28px; white-space: nowrap; }
.cat-head > button { flex: 1; font-style: italic; }
.cat-head .option { width: 62px; margin-left: 5px; }
.nav-row { display: flex; height: 25px; gap: 4px; align-items: stretch; padding-left: 2px; }
.nav-row button { padding: 0 2px; }
.nav-row label { line-height: 26px; }
.nav-row input { flex: 1; min-width: 0; padding: 0 0 3px 4px; margin-right: 2px; border-color: var(--teal-dark) var(--teal-lite) var(--teal-lite) var(--teal-dark); }
.zoom-row { display: flex; margin-top: 2px; gap: 5px; }
.zoom-box { display: flex; height: 32px; border: 1px solid #000; line-height: 30px; }
.zoom-box > .option { width: 118px; margin-left: 5px; }
.zoom-box > label[for] { background: var(--cyan); border-left: 2px solid #000; }
.sv { background: #1aea1a; padding: 1px 2px 1px 6px; }
.sv .option { width: 61px; height: 28px; background: #1aea1a; }
.show-all { display: flex; gap: 2px; height: 26px; align-items: center; white-space: nowrap; }
.show-all input { width: 13px; height: 13px; border: 1px solid; border-color: var(--teal-lite) var(--teal-dark) var(--teal-dark) var(--teal-lite); }
.pane-cats .tools { justify-content: flex-end; padding: 2px 3px 2px; }
.result { height: 19px; flex: none; line-height: 20px; padding-left: 129px; }
.erf-line { height: 22px; flex: none; line-height: 21px; background: var(--cream); border: 1px solid #000; border-top-width: 2px; }
.viewer-foot { height: 34px; flex: none; display: flex; gap: 4px; padding: 2px 1px 2px 2px; background: var(--cyan); }
.viewer-foot > :first-child { flex: 1; }
.viewer-foot svg text { font-weight: bold; }
.hot { border-color: #e01010; }

/* taskbar */
.taskbar {
  height: 40px;
  flex: none;
  display: flex;
  align-items: center;
  padding-left: 8px;
  background: linear-gradient(#1b3557, #061f44 12px, #0a2c57);
  border-top: 1px solid #000;
  font: 12px/18px "Open Sans", sans-serif;
  color: #fff;
}
.start { width: 38px; height: 38px; margin-right: 14px; }
.task {
  width: 58px;
  height: 38px;
  margin-right: 4px;
  display: grid;
  place-items: center;
  border: 1px solid #8296ad;
  border-radius: 3px;
  background: linear-gradient(165deg, #75879d, #2c4a70 45%, #1c3f70);
}
.task svg { width: 34px; height: 30px; }
.task text { font: bold 7px "Liberation Sans", sans-serif; }
.task.active { background: linear-gradient(165deg, #e3e6ea, #8b9bb1 50%, #a7b5c8); border-color: #fff; }
.task.stack { width: 50px; margin-right: 12px; box-shadow: 3px 0 #16335a, 4px 0 #8296ad, 7px 0 #16335a, 8px 0 #8296ad; }
.tray { margin-left: auto; display: flex; align-items: center; gap: 8px; }
.tray .more { margin: 0 5px; }
.tray time { width: 72px; margin: 0 -6px 0 2px; text-align: center; }
.show-desktop { width: 14px; height: 38px; border: 1px solid #7c8ca2; background: linear-gradient(135deg, #5b6d85, #0d2444); }
```
